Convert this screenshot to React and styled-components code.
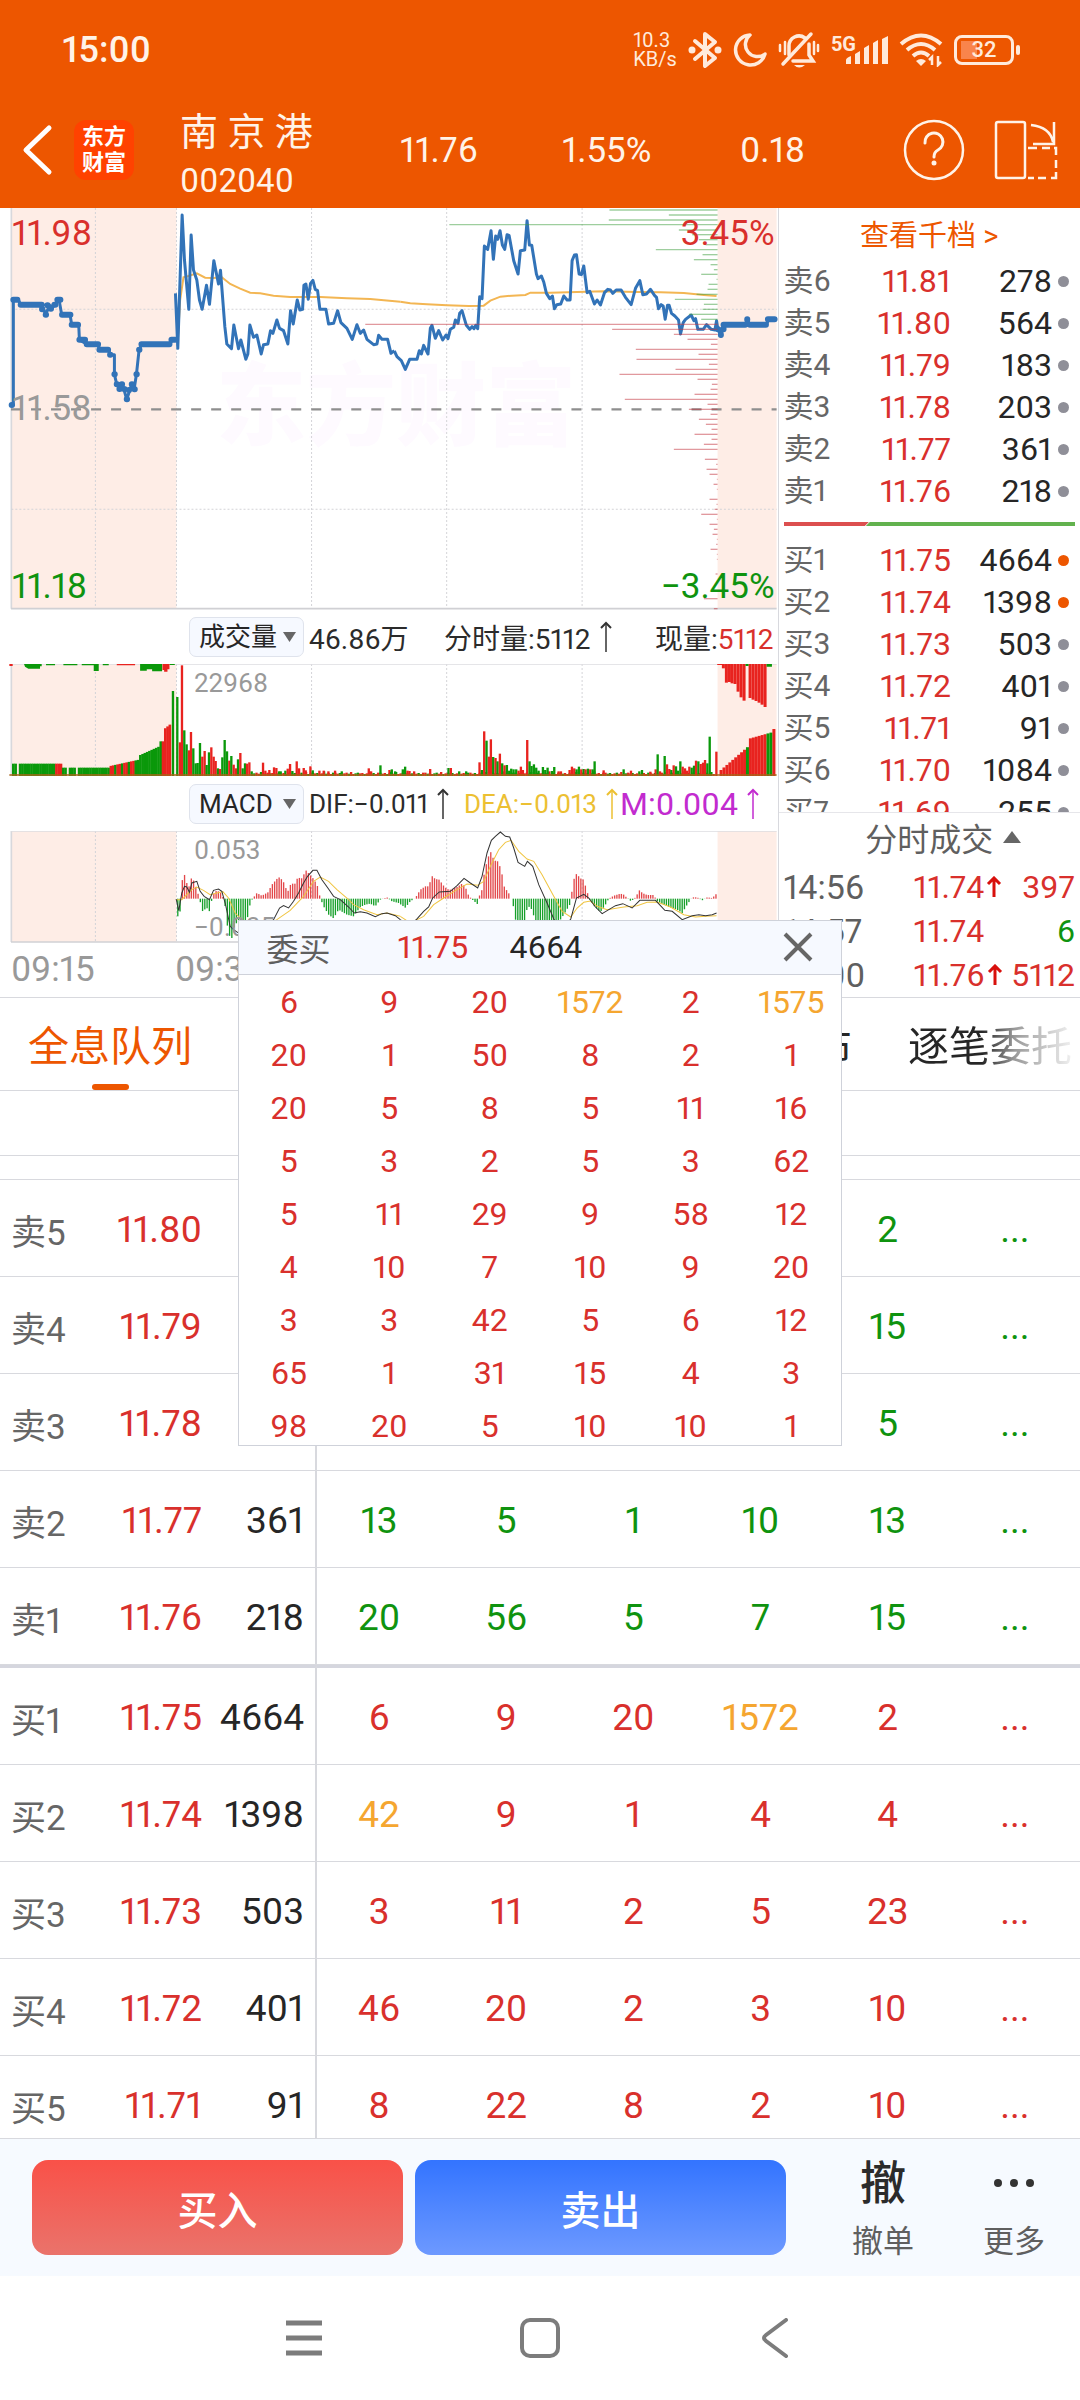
import styled, { createGlobalStyle } from "styled-components";

const RED = "#d9302c";
const GREEN = "#0f930f";
const AMBER = "#f5a630";
const ORANGE = "#ed5600";
const LINE = "#d8d9de";

const colors = { red: RED, green: GREEN, amber: AMBER };

const asks = [
  ["卖6", "11.81", "278"],
  ["卖5", "11.80", "564"],
  ["卖4", "11.79", "183"],
  ["卖3", "11.78", "203"],
  ["卖2", "11.77", "361"],
  ["卖1", "11.76", "218"],
];

const bids = [
  ["买1", "11.75", "4664", true],
  ["买2", "11.74", "1398", true],
  ["买3", "11.73", "503"],
  ["买4", "11.72", "401"],
  ["买5", "11.71", "91"],
  ["买6", "11.70", "1084"],
  ["买7", "11.69", "255"],
];

const deals = [
  { time: "14:56", price: "11.74", up: true, volume: "397", side: "red" },
  { time: "14:57", price: "11.74", up: false, volume: "6", side: "green" },
  { time: "15:00", price: "11.76", up: true, volume: "5112", side: "red" },
];

const sellQueue = [
  ["卖5", "11.80", "564", [20, 3, 8, 5, 2]],
  ["卖4", "11.79", "183", [10, 2, 5, 6, 15]],
  ["卖3", "11.78", "203", [4, 9, 1, 12, 5]],
  ["卖2", "11.77", "361", [13, 5, 1, 10, 13]],
  ["卖1", "11.76", "218", [20, 56, 5, 7, 15]],
];

const buyQueue = [
  ["买1", "11.75", "4664", [6, 9, 20, 1572, 2]],
  ["买2", "11.74", "1398", [42, 9, 1, 4, 4]],
  ["买3", "11.73", "503", [3, 11, 2, 5, 23]],
  ["买4", "11.72", "401", [46, 20, 2, 3, 10]],
  ["买5", "11.71", "91", [8, 22, 8, 2, 10]],
];

const bigOrders = [1572, 1575, 42];

const popupRows = [
  [6, 9, 20, 1572, 2, 1575],
  [20, 1, 50, 8, 2, 1],
  [20, 5, 8, 5, 11, 16],
  [5, 3, 2, 5, 3, 62],
  [5, 11, 29, 9, 58, 12],
  [4, 10, 7, 10, 9, 20],
  [3, 3, 42, 5, 6, 12],
  [65, 1, 31, 15, 4, 3],
  [98, 20, 5, 10, 10, 1],
];

// Chart data is kept in chart units, three to a pixel. The afternoon half
// of every series starts at AFTERNOON.
const AFTERNOON = 1170;

const openAuction =
  "35,618 40,615 40,299 55,299 62,314 125,314 137,344 148,316 160,320 177,299 185,344 210,344 215,374 236,374 238,419 260,433 295,433 298,449 325,449 332,464 343,464 343,523 350,553 360,567 367,553 372,570 380,598 395,553 402,568 409,523 417,449 425,433 510,433 516,419 526,419";
const openAuctionDots =
  "M35 615h1M40 299H52M62 314H125M126 328h1M137 344h1M142 316h1M152 326h1M163 314h3M172 299H181M186 344H211M215 374H234M238 419H255M260 433H294M298 449H324M330 464h1M343 523h1M350 553h1M358 567h1M365 553h1M372 567h1M380 598h1M386 570h1M395 553h1M403 568h1M409 523h1M417 449h1M424 433H508M514 419H525";
const closeAuctionDots =
  "M982 388h1M991 404v1M999 388v-2M999 374H1064M1070 358v1M1078 374H1126M1132 358H1152";

const priceMorning =
  "526,280 533,445 546,45 553,180 566,328 573,105 580,210 590,240 598,300 606,328 619,256 628,313 641,182 655,252 661,211 674,380 680,432 694,446 701,375 715,446 722,420 737,478 743,462 749,375 760,412 770,405 783,462 790,434 803,432 811,392 818,400 830,360 838,385 850,392 863,432 871,332 879,372 891,300 899,330 907,328 911,256 917,252 924,298 931,250 938,241 945,268 952,272 959,328 977,328 985,372 1000,370 1012,332 1022,368 1040,385 1056,418 1070,374 1080,400 1090,390 1100,418 1120,434 1130,432 1135,406 1145,418 1162,418 1172,460 1182,452";
const priceAfternoon =
  "12,453 20,470 33,482 45,508 58,478 80,478 87,452 93,462 100,436 113,462 120,385 125,376 135,415 145,392 157,420 167,405 173,416 180,388 190,382 195,360 203,370 208,340 215,332 228,376 238,388 245,380 251,386 256,376 262,386 268,290 275,296 282,138 292,148 302,92 309,178 316,108 322,118 329,92 336,135 343,148 350,104 356,106 370,182 383,222 390,152 403,150 410,62 417,135 424,136 438,222 443,236 453,228 460,246 468,280 478,296 486,288 492,326 499,314 511,312 520,288 530,300 539,300 545,182 552,165 558,164 566,222 573,224 580,198 590,278 598,274 612,312 620,300 630,315 642,278 652,268 660,270 667,280 677,270 692,270 705,292 722,314 735,265 748,242 757,284 768,282 780,268 792,286 798,292 804,326 812,314 818,318 824,358 831,316 836,316 843,340 853,348 864,360 870,402 878,368 885,358 902,345 910,362 915,356 922,388 938,388 948,374 962,388 973,390 978,362 982,388 992,408 998,374 1065,374 1070,358 1078,374 1128,374 1134,358 1155,358";
const averageMorning =
  "533,420 540,300 550,232 565,228 590,220 615,233 640,234 665,232 690,252 720,266 750,278 780,280 820,287 870,291 960,291 1040,295 1110,297 1200,305";
const averageAfternoon =
  "30,305 60,310 110,313 170,316 235,318 280,317 300,302 330,290 365,287 405,285 420,278 480,278 560,276 640,274 740,276 810,277 880,279 940,285 978,288";

const askDepth = [
  [30, 657], [45, 835], [60, 655], [74, 177], [90, 865], [104, 905], [119, 925],
  [134, 945], [149, 796], [164, 936], [179, 910], [194, 960], [209, 970],
  [223, 932], [238, 978], [253, 954], [268, 951], [283, 918], [298, 853],
  [313, 940], [328, 936], [343, 895], [358, 932],
];
const bidDepth = [
  [373, -75], [388, 665], [403, 850], [418, 891], [433, 961], [448, 736],
  [463, 924], [478, 738], [493, 955], [508, 855], [523, 687], [538, 921],
  [553, 964], [568, 960], [583, 912], [598, 703], [613, 951], [628, 895],
  [643, 960], [658, 925], [673, 946], [688, 963], [703, 912], [718, 963],
  [733, 940], [748, 850], [778, 943], [793, 977], [808, 948], [823, 957],
  [838, 979], [853, 969], [868, 979], [898, 957], [913, 978], [928, 972],
  [943, 932], [958, 979], [973, 957], [988, 970], [1003, 966], [1018, 979],
  [1033, 977], [1048, 960], [1063, 979], [1078, 979], [1122, 975],
  [1196, 940], [1226, 970],
];

// x, top of the bar, colour
const volumeMorning =
  "519,273,g 532,291,g 540,427,r 546,196,r 553,391,g 560,433,g 567,451,r 573,396,r 580,445,g 587,490,g 593,489,g 600,429,g 607,470,r 614,453,r 620,495,g 627,457,g 634,442,r 641,470,r 647,483,r 654,505,g 660,507,r 667,472,g 674,420,g 681,454,g 688,482,r 694,468,g 701,494,r 708,505,r 714,478,g 721,459,r 728,505,g 735,490,g 741,491,r 748,487,r 755,514,g 789,488,r 796,512,r 808,510,r 822,502,r 829,504,r 842,514,g 856,512,g 863,506,r 870,492,r 877,513,g 890,484,r 897,505,r 911,504,r 917,511,r 931,499,r 938,511,g 958,512,r 971,512,r 985,514,r 1005,512,r 1025,514,g 1106,505,r 1113,514,r 1141,496,g 1168,510,r 1175,508,g 1185,514,g";
const volumeAfternoon =
  "3,515,g 38,508,g 45,500,g 52,512,r 58,513,r 120,507,r 175,504,g 182,504,r 228,514,g 268,487,r 275,510,g 282,394,r 289,422,g 296,470,r 302,418,r 309,471,g 316,474,r 322,484,g 329,461,r 336,490,g 343,496,r 350,495,g 357,512,g 363,506,g 370,508,g 378,508,g 385,512,r 392,500,r 398,510,r 411,420,r 418,484,g 424,498,g 431,493,g 438,503,g 445,512,g 458,501,g 465,510,g 472,503,g 485,513,g 492,501,g 505,514,r 512,514,r 538,510,r 545,500,r 552,505,r 559,508,g 566,500,g 573,508,r 580,507,g 586,508,r 593,506,g 600,508,r 607,508,g 613,484,g 640,511,r 700,508,g 722,512,r 755,510,g 780,515,r 796,508,r 802,463,g 809,514,r 823,468,g 830,493,r 837,507,r 843,510,g 850,496,r 857,499,g 863,512,g 870,484,g 877,500,r 884,505,r 890,512,r 897,500,r 904,503,g 911,497,g 917,482,r 924,484,g 931,492,r 938,488,r 944,480,r 951,490,g 958,410,g 978,455,r";

const histogram =
  "528,900 533,950 540,935 545,845 553,825 560,850 568,862 573,836 580,842 590,870 597,893 600,905 606,935 620,925 628,935 636,895 642,880 650,872 662,880 668,892 675,920 684,1000 694,1020 701,985 710,968 740,965 748,920 756,899 770,880 785,888 803,878 815,855 835,832 848,842 862,878 872,852 885,852 892,834 905,836 917,812 930,826 942,840 952,860 960,895 970,920 985,945 1000,956 1015,930 1040,945 1060,950 1080,922 1095,915 1110,912 1125,920 1140,900 1160,893 1175,905 1195,910 1215,924 1230,905 1245,895 1260,870 1275,860 1285,860 1295,829 1305,838 1317,840 1328,856 1340,868 1350,870 1370,862 1385,852 1395,862 1405,888 1415,899 1432,914 1438,885 1445,870 1453,810 1466,765 1473,755 1480,782 1492,785 1502,808 1512,862 1528,885 1538,915 1548,975 1570,975 1582,918 1595,930 1607,975 1670,975 1690,945 1710,912 1715,870 1722,832 1730,820 1737,835 1750,840 1758,870 1768,900 1782,920 1800,937 1815,915 1825,897 1840,888 1860,882 1870,885 1882,897 1892,905 1905,893 1918,870 1925,880 1940,886 1960,886 1970,905 2000,920 2030,930 2045,940 2060,915 2075,893 2090,893 2105,902 2120,893 2135,895 2148,882";
const difMorning =
  "528,898 536,933 545,880 553,860 560,862 568,878 575,850 590,845 600,875 612,890 628,900 640,872 655,868 665,875 675,910 690,980 700,990 730,1010 780,1000 820,960 838,925 850,918 865,925 880,905 895,880 910,850 922,830 938,812 950,812 965,840 985,868 1000,890 1020,900 1045,922 1062,940 1080,936 1100,940 1125,951 1145,942 1160,940 1185,948 1200,960";
const difAfternoon =
  "30,960 50,975 78,960 100,935 115,922 127,895 147,877 180,875 200,858 221,836 240,850 262,865 275,830 290,760 303,722 315,710 330,697 345,710 358,712 370,745 383,788 403,800 411,785 427,800 445,855 470,910 490,958 515,990 541,958 558,895 580,884 595,895 615,922 635,942 655,930 675,918 697,912 725,925 748,902 795,902 823,932 845,935 875,960 905,948 925,945 945,948 965,945 978,940";
const deaMorning =
  "530,900 545,900 560,885 575,870 590,862 610,872 630,885 650,880 668,876 685,895 705,940 730,965 780,985 830,960 870,932 910,890 940,845 960,832 985,845 1010,870 1040,895 1060,915 1090,930 1130,945 1160,940 1200,950";
const deaAfternoon =
  "30,950 60,970 100,950 130,915 160,895 200,870 230,853 262,857 280,845 300,800 325,750 345,728 362,722 385,755 410,778 430,785 455,825 490,890 515,935 541,952 560,925 580,908 600,904 620,920 650,930 700,922 740,918 770,908 800,907 840,922 880,945 915,952 945,950 978,948";

function parsePoints(text) {
  return text.split(" ").map((point) => point.split(",").map(Number));
}

function parseBars(text, shift) {
  return text.split(" ").map((bar) => {
    const [x, top, side] = bar.split(",");
    return { x: Number(x) + shift, top: Number(top), side };
  });
}

const volumeBars = [
  ...parseBars(volumeMorning, 0),
  ...parseBars(volumeAfternoon, AFTERNOON),
];

// quiet minutes between the peaks
const quietBars = Array.from({ length: 206 }, (_, i) => ({
  x: 756 + i * 6.75,
  top: 522 - ((i * 7) % 5) * ((i * 3) % 4 === 0 ? 2 : 1),
  side: (i * 5) % 7 < 4 ? "r" : "g",
}));

const openVolumeBars = Array.from({ length: 70 }, (_, i) => {
  const x = 37 + i * 6.8;
  let top = 491;
  if (x > 185) top = 503;
  if (x > 323) top = 499 - (x - 323) * 0.22;
  if (x > 411) top = 468 - (x - 411) * 0.45;
  if (x > 475) top = 424;
  if (x > 486) top = 390 - (x - 486) * 0.8;
  if (x > 507) top = 352;
  const isRed =
    (x > 166 && x < 182) || (x > 484 && x < 507) || (x > 323 && x < 405 && i % 3);
  const isGap = [2, 24, 28].includes(i);
  return { x: x + 3, top, side: isRed ? "r" : "g", isGap };
}).filter((bar) => !bar.isGap);

const closeVolumeBars = Array.from({ length: 19 }, (_, i) => {
  const x = 991 + i * 8.8;
  let top = 510 - i * 7.6;
  if (x > 1072) top = 417 - (x - 1072) * 0.28;
  if (i === 18) top = 387;
  return {
    x: x + AFTERNOON,
    top,
    side: i === 9 || i === 16 || i === 17 ? "g" : "r",
  };
});

const hangingBars = [
  [998, 205], [1007, 248], [1016, 246], [1024, 250], [1033, 252], [1042, 275],
  [1051, 292], [1060, 302], [1078, 294], [1087, 299], [1096, 303],
  [1105, 308], [1114, 314], [1123, 321],
];

function sampleHistogram() {
  const points = parsePoints(histogram);
  const bars = [];
  let k = 0;
  for (let x = 533; x <= 2150; x += 6.75) {
    while (k < points.length - 2 && points[k + 1][0] < x) k++;
    const [x1, y1] = points[k];
    const [x2, y2] = points[k + 1];
    bars.push({ x, y: y1 + ((y2 - y1) * (x - x1)) / (x2 - x1) });
  }
  return bars;
}

const histogramBars = sampleHistogram();

function Grid({ top, bottom }) {
  return (
    <>
      <rect x="33" y={top} width="496" height={bottom - top} fill="#feede6" />
      <rect x="2151" y={top} width="177" height={bottom - top} fill="#feede6" />
      <g stroke="#d4d4d8" strokeWidth="3" strokeDasharray="6 6">
        {[286, 529, 934, 1339, 1745].map((x) => (
          <line key={x} x1={x} x2={x} y1={top} y2={bottom} />
        ))}
      </g>
      <line x1="34" x2="34" y1={top} y2={bottom} stroke="#d8d8dc" strokeWidth="5" />
    </>
  );
}

function PriceChart() {
  return (
    <Plot $height={402}>
      <Watermark aria-hidden="true">东方财富</Watermark>
      <Canvas viewBox="0 24 2331 1206" preserveAspectRatio="none">
        <Grid top={24} bottom={1226} />
        <g stroke="#d4d4d8" strokeWidth="3" strokeDasharray="6 6">
          <line x1="34" x2="2328" y1="328" y2="328" />
          <line x1="34" x2="2328" y1="928" y2="928" />
        </g>
        <line x1="33" x2="2328" y1="1226" y2="1226" stroke="#d0d0d4" strokeWidth="5" />
        <line
          x1="33"
          x2="2328"
          y1="628"
          y2="628"
          stroke="#8e8e8e"
          strokeWidth="7"
          strokeDasharray="30 30"
        />
        <g fill="none" stroke="#f3b653" strokeWidth="6">
          <polyline points={averageMorning} />
          <polyline points={averageAfternoon} transform={`translate(${AFTERNOON})`} />
        </g>
        <g fill="none" stroke="#3273b8" strokeWidth="9" strokeLinejoin="round">
          <polyline points={openAuction} />
          <polyline points={priceMorning} />
          <polyline points={priceAfternoon} transform={`translate(${AFTERNOON})`} />
        </g>
        <g fill="none" stroke="#3273b8" strokeWidth="18" strokeLinecap="round">
          <path d={openAuctionDots} />
          <path d={closeAuctionDots} transform={`translate(${AFTERNOON})`} />
        </g>
        <g transform={`translate(${AFTERNOON})`} strokeWidth="4" opacity="0.5">
          {askDepth.map(([y, x]) => (
            <line key={y} x1={x} x2="981" y1={y} y2={y} stroke="#3f9f3f" />
          ))}
          {bidDepth.map(([y, x]) => (
            <line key={y} x1={x} x2="981" y1={y} y2={y} stroke="#c4363f" />
          ))}
        </g>
      </Canvas>
      <CornerLabel $color={RED} $top={8} $left={12}>11.98</CornerLabel>
      <CornerLabel $color="#999" $top={183} $left={12}>11.58</CornerLabel>
      <CornerLabel $color={GREEN} $top={361} $left={12}>11.18</CornerLabel>
      <CornerLabel $color={RED} $top={8} $right={3}>3.45%</CornerLabel>
      <CornerLabel $color={GREEN} $top={361} $right={3}>−3.45%</CornerLabel>
    </Plot>
  );
}

function VolumeChart() {
  const fill = { r: "#e8231f", g: "#0a980a" };
  return (
    <Plot $height={112}>
      <Canvas viewBox="0 192 2331 336" preserveAspectRatio="none">
        <Grid top={192} bottom={528} />
        <line x1="33" x2="2328" y1="193" y2="193" stroke="#dcdce0" strokeWidth="3" />
        {openVolumeBars.map(({ x, top, side }) => (
          <rect key={x} x={x - 4} y={top} width="8" height={528 - top} fill={fill[side]} />
        ))}
        {[...quietBars, ...volumeBars].map(({ x, top, side }, i) => (
          <rect key={i} x={x - 4} y={top} width="7" height={528 - top} fill={fill[side]} />
        ))}
        {closeVolumeBars.map(({ x, top, side }) => (
          <rect key={x} x={x - 4} y={top} width="9" height={528 - top} fill={fill[side]} />
        ))}
        {hangingBars.map(([x, bottom]) => (
          <rect
            key={x}
            x={x + AFTERNOON - 4}
            y="192"
            width="9"
            height={bottom - 192}
            fill={fill.r}
          />
        ))}
        <path
          fill={fill.g}
          d="M72 192H125V199H120V206H85L75 200ZM138 192H165V196H138ZM190 192H232V196H190ZM245 192H281V196H245ZM281 192H296V213H281ZM308 192H326V196H308ZM420 192H486V214H456V208H440V212H420ZM508 192H524V195H508ZM2235 192H2244V198H2235ZM2298 192H2314V200H2298Z"
        />
        <path
          fill={fill.r}
          d="M28 192H38V198H28ZM350 192H405V196H350ZM487 192H508V208H502V215H492V210H487ZM2150 192H2170V195H2150Z"
        />
        <line x1="28" x2="2328" y1="525" y2="525" stroke="#a8641a" strokeWidth="4" />
      </Canvas>
      <ScaleLabel $top={4}>22968</ScaleLabel>
    </Plot>
  );
}

function MacdChart() {
  return (
    <Plot $height={112}>
      <Canvas viewBox="0 694 2331 336" preserveAspectRatio="none">
        <Grid top={694} bottom={1027} />
        <line x1="33" x2="2328" y1="695" y2="695" stroke="#dcdce0" strokeWidth="3" />
        <line x1="33" x2="2328" y1="1027" y2="1027" stroke="#d0d0d4" strokeWidth="4" />
        {histogramBars.map(({ x, y }) => (
          <rect
            key={x}
            x={x - 2}
            y={Math.min(y, 897)}
            width="4"
            height={Math.abs(y - 897)}
            fill={y < 897 ? "#e2474a" : "#17a02a"}
          />
        ))}
        <g fill="none" stroke="#f0c541" strokeWidth="3">
          <polyline points={deaMorning} />
          <polyline points={deaAfternoon} transform={`translate(${AFTERNOON})`} />
        </g>
        <g fill="none" stroke="#333" strokeWidth="3">
          <polyline points={difMorning} />
          <polyline points={difAfternoon} transform={`translate(${AFTERNOON})`} />
        </g>
      </Canvas>
      <ScaleLabel $top={4}>0.053</ScaleLabel>
      <ScaleLabel $top={81}>−0.035</ScaleLabel>
    </Plot>
  );
}

function LongArrow({ color }) {
  return (
    <svg width="12" height="32" viewBox="0 0 12 32" fill="none" stroke={color}>
      <path d="M1 7L6 2L11 7" strokeWidth="2" />
      <path d="M6 2V31" strokeWidth="1.5" />
    </svg>
  );
}

function StatusBar() {
  const tone = "#ffeadb";
  return (
    <StatusRow>
      <Clock>15:00</Clock>
      <StatusIcons>
        <NetSpeed>
          10.3
          <br />
          KB/s
        </NetSpeed>
        <svg width="34" height="38" viewBox="0 0 34 38" fill="none" stroke={tone} strokeWidth="4" strokeLinejoin="round" strokeLinecap="round">
          <path d="M7 10L27 27L17 35V3L27 11L7 28" />
          <g fill={tone} stroke="none">
            <circle cx="4" cy="19" r="3.5" />
            <circle cx="30" cy="19" r="3.5" />
          </g>
        </svg>
        <svg width="34" height="36" viewBox="0 0 34 36" fill="none" stroke={tone} strokeWidth="3.5" strokeLinejoin="round">
          <path d="M17 3A15 15 0 1 0 32 22A12 12 0 0 1 17 3Z" />
        </svg>
        <svg width="42" height="38" viewBox="0 0 42 38" fill="none" stroke={tone} strokeWidth="3.5" strokeLinecap="round">
          <path d="M11 24V15A10 10 0 0 1 27 7M31 13V24L35 30H15" />
          <path d="M5 33L33 3" />
          <path d="M2 14V20M7 11V23M36 11V23M40 14V20" strokeWidth="2.5" />
          <path d="M16 34H27Q21 39 16 34Z" fill={tone} stroke="none" />
        </svg>
        <Signal>
          <small>5G</small>
          <svg width="42" height="28" viewBox="0 0 42 28" fill={tone}>
            <path d="M0 24Q0 22 5 20V28H0ZM9 18L14 15V28H9ZM18 12L23 9V28H18ZM27 7L32 4V28H27ZM36 3L42 0V28H36Z" />
          </svg>
        </Signal>
        <svg width="44" height="34" viewBox="0 0 44 34" fill="none" stroke={tone} strokeWidth="4">
          <path d="M2 11Q22 -6 42 11" />
          <path d="M8 17Q22 5 36 17" />
          <path d="M14 23Q22 16 30 23" />
          <path d="M17 28Q22 24 27 28L22 33Z" fill={tone} stroke="none" />
          <path d="M33 32V24L30 27M39 23V32L42 29" strokeWidth="2.5" />
        </svg>
        <Battery>
          <span>32</span>
        </Battery>
      </StatusIcons>
    </StatusRow>
  );
}

function BookRow({ row }) {
  const [label, price, volume, isActive] = row;
  return (
    <BookLine>
      <BookLabel>{label}</BookLabel>
      <BookPrice>{price}</BookPrice>
      <span>{volume}</span>
      <Dot $isActive={isActive} />
    </BookLine>
  );
}

function QueueRow({ row, side }) {
  const [label, price, total, orders] = row;
  return (
    <tr>
      <LabelCell scope="row">{label}</LabelCell>
      <PriceCell>{price}</PriceCell>
      <TotalCell>{total}</TotalCell>
      {orders.map((order, i) => (
        <OrderCell key={i} $color={bigOrders.includes(order) ? "amber" : side}>
          {order}
        </OrderCell>
      ))}
      <OrderCell $color={side}>...</OrderCell>
    </tr>
  );
}

export default function App() {
  return (
    <Page>
      <GlobalStyle />
      <Top>
        <StatusBar />
        <Header>
          <IconButton aria-label="返回">
            <svg width="32" height="52" viewBox="0 0 32 52" fill="none" stroke="#fff" strokeWidth="5" strokeLinecap="round" strokeLinejoin="round">
              <path d="M27 4L4 26L27 48" />
            </svg>
          </IconButton>
          <Logo>
            东方
            <br />
            财富
          </Logo>
          <Stock>
            <h1>南 京 港</h1>
            <p>002040</p>
          </Stock>
          <Quote $width={162}>11.76</Quote>
          <Quote $width={178}>1.55%</Quote>
          <Quote $width={163}>0.18</Quote>
          <HeaderTools>
            <IconButton aria-label="帮助">
              <svg width="62" height="62" viewBox="0 0 62 62" fill="none" stroke="#fff3e8" strokeWidth="2.5" strokeLinecap="round">
                <circle cx="31" cy="31" r="29" />
                <path d="M22 24A9 9 0 1 1 35 31Q31 33 31 38" strokeWidth="3" />
                <circle cx="31" cy="44" r="2.5" fill="#fff3e8" stroke="none" />
              </svg>
            </IconButton>
            <IconButton aria-label="横屏">
              <svg width="64" height="60" viewBox="0 0 64 60" fill="none" stroke="#fff3e8" strokeWidth="2.5">
                <rect x="2" y="2" width="29" height="56" rx="2" />
                <path d="M37 5Q56 7 59 22M60 2V24H39" />
                <path d="M34 28H43M48 28H56M60 28H62V35M62 40V48M62 52V58H57M52 58H44M40 58H34" />
              </svg>
            </IconButton>
          </HeaderTools>
        </Header>
      </Top>

      <Trading>
        <Charts>
          <PriceChart />
          <ToolRow $columns="115px 130px 1fr auto" $height={54}>
            <Picker>
              <select aria-label="指标一" defaultValue="vol">
                <option value="vol">成交量</option>
              </select>
              <svg width="13" height="10" viewBox="0 0 13 10" fill="#666">
                <path d="M0 0H13L6.5 10Z" />
              </svg>
            </Picker>
            <Reading>46.86万</Reading>
            <Reading>
              分时量:5112 <LongArrow color="#333" />
            </Reading>
            <Reading>
              <span>
                现量:<Red>5112</Red>
              </span>
            </Reading>
          </ToolRow>
          <VolumeChart />
          <ToolRow $columns="115px 150px 151px 1fr" $height={55}>
            <Picker>
              <select aria-label="指标二" defaultValue="macd">
                <option value="macd">MACD</option>
              </select>
              <svg width="13" height="10" viewBox="0 0 13 10" fill="#666">
                <path d="M0 0H13L6.5 10Z" />
              </svg>
            </Picker>
            <Reading $size={26}>
              DIF:−0.011 <LongArrow color="#333" />
            </Reading>
            <Reading $color="#ecc032" $size={26}>
              DEA:−0.013 <LongArrow color="#ecc032" />
            </Reading>
            <Reading $color="#c22bcf" $size={32}>
              M:0.004 <LongArrow color="#c22bcf" />
            </Reading>
          </ToolRow>
          <MacdChart />
          <TimeAxis>
            <span>09:15</span>
            <span>09:30</span>
          </TimeAxis>
        </Charts>

        <Side>
          <Book>
            <BookLink href="#levels">查看千档 &gt;</BookLink>
            {asks.map((row) => (
              <BookRow key={row[0]} row={row} />
            ))}
            <Balance>
              <svg width="100%" height="4" viewBox="0 0 292 4" preserveAspectRatio="none">
                <path d="M0 0H85L81 4H0Z" fill="#dc4f4f" />
                <path d="M86 0H292V4H82Z" fill="#62b24e" />
              </svg>
            </Balance>
            {bids.map((row) => (
              <BookRow key={row[0]} row={row} />
            ))}
          </Book>
          <Deals>
            <DealsTitle>
              分时成交
              <svg width="18" height="12" viewBox="0 0 18 12" fill="#666">
                <path d="M0 12H18L9 0Z" />
              </svg>
            </DealsTitle>
            {deals.map(({ time, price, up, volume, side }) => (
              <Deal key={time}>
                <DealTime>{time}</DealTime>
                <DealPrice>
                  {price}
                  {up && (
                    <svg width="16" height="22" viewBox="0 0 16 22" fill="none" stroke="#d8100c" strokeWidth="3">
                      <path d="M2 8L8 2L14 8M8 2V21" />
                    </svg>
                  )}
                </DealPrice>
                <DealVolume $color={side}>{volume}</DealVolume>
              </Deal>
            ))}
          </Deals>
        </Side>
      </Trading>

      <Tabs>
        <Tab $isActive>全息队列</Tab>
        <Tab>成交分布</Tab>
        <Tab $isFading>逐笔委托</Tab>
      </Tabs>

      <QueueArea>
        <EmptyStrip />
        <Queue>
          <colgroup>
            <col style={{ width: 90 }} />
            <col style={{ width: 112 }} />
            <col style={{ width: 115 }} />
            <col span="6" />
          </colgroup>
          <tbody>
            {sellQueue.map((row) => (
              <QueueRow key={row[0]} row={row} side="green" />
            ))}
          </tbody>
          <BuyBody>
            {buyQueue.map((row) => (
              <QueueRow key={row[0]} row={row} side="red" />
            ))}
          </BuyBody>
        </Queue>
      </QueueArea>

      <ActionBar>
        <TradeButton $from="#f95148" $to="#ea736b">买入</TradeButton>
        <TradeButton $from="#3374ff" $to="#6d99ff">卖出</TradeButton>
        <SmallAction>
          <strong>撤</strong>
          <span>撤单</span>
        </SmallAction>
        <SmallAction>
          <svg width="42" height="46" viewBox="0 0 42 46" fill="#333">
            <circle cx="5" cy="23" r="4" />
            <circle cx="21" cy="23" r="4" />
            <circle cx="37" cy="23" r="4" />
          </svg>
          <span>更多</span>
        </SmallAction>
      </ActionBar>

      <SystemNav>
        <IconButton aria-label="最近任务">
          <svg width="40" height="40" viewBox="0 0 40 40" stroke="#7c7c7c" strokeWidth="5">
            <path d="M2 5H38M2 20H38M2 35H38" />
          </svg>
        </IconButton>
        <IconButton aria-label="主页">
          <svg width="40" height="40" viewBox="0 0 40 40" fill="none" stroke="#7c7c7c" strokeWidth="4">
            <rect x="2" y="2" width="36" height="36" rx="8" />
          </svg>
        </IconButton>
        <IconButton aria-label="后退">
          <svg width="40" height="40" viewBox="0 0 40 40" fill="none" stroke="#7c7c7c" strokeWidth="4" strokeLinecap="round">
            <path d="M30 2L10 17Q6 20 10 23L30 38" />
          </svg>
        </IconButton>
      </SystemNav>

      <Popup role="dialog" aria-label="委买队列">
        <PopupHeader>
          <PopupTitle>委买</PopupTitle>
          <Red>11.75</Red>
          <PopupTotal>4664</PopupTotal>
          <IconButton aria-label="关闭">
            <svg width="30" height="30" viewBox="0 0 30 30" stroke="#666" strokeWidth="4">
              <path d="M2 2L28 28M28 2L2 28" />
            </svg>
          </IconButton>
        </PopupHeader>
        <PopupTable>
          <tbody>
            {popupRows.map((row, i) => (
              <tr key={i}>
                {row.map((order, k) => (
                  <PopupCell key={k} $isBig={order > 1000}>
                    {order}
                  </PopupCell>
                ))}
              </tr>
            ))}
          </tbody>
        </PopupTable>
      </Popup>
    </Page>
  );
}

const GlobalStyle = createGlobalStyle`
  * {
    box-sizing: border-box;
  }

  body {
    margin: 0;
    background: #fff;
    color: #262626;
    font-family: Roboto, "Noto Sans CJK SC", sans-serif;
    font-variant-numeric: proportional-nums;
  }

  button,
  select {
    font: inherit;
    color: inherit;
    border: none;
    background: none;
    padding: 0;
  }

  svg {
    display: block;
    flex-shrink: 0;
  }
`;

const Page = styled.main`
  position: relative;
  display: flex;
  flex-direction: column;
  height: 100vh;
  overflow: hidden;
`;

const Top = styled.header`
  flex-shrink: 0;
  background: ${ORANGE};
  color: #fff3e8;
`;

const StatusRow = styled.div`
  display: flex;
  justify-content: space-between;
  align-items: center;
  height: 100px;
  padding: 0 66px 0 62px;
`;

const Clock = styled.time`
  font-size: 36px;
  font-weight: 500;
`;

const StatusIcons = styled.div`
  display: flex;
  align-items: center;
  gap: 11px;
  color: #ffeadb;
`;

const NetSpeed = styled.span`
  font-size: 20px;
  line-height: 19px;
`;

const Signal = styled.span`
  display: flex;
  align-items: flex-end;
  height: 28px;

  small {
    align-self: flex-start;
    margin-right: -10px;
    font-size: 20px;
    line-height: 16px;
    font-weight: 700;
  }
`;

const Battery = styled.span`
  position: relative;
  width: 60px;
  height: 30px;
  border: 3px solid #ffeadb;
  border-radius: 8px;
  background: linear-gradient(#f9844c, #f9844c) 4px 3px / 16px 18px no-repeat;
  font-size: 22px;
  font-weight: 500;
  line-height: 24px;
  text-align: center;

  &::after {
    content: "";
    position: absolute;
    top: 7px;
    right: -9px;
    width: 4px;
    height: 10px;
    border-radius: 2px;
    background: #ffeadb;
  }
`;

const Header = styled.div`
  display: flex;
  align-items: center;
  height: 108px;
  padding: 0 22px 8px;
`;

const HeaderTools = styled.div`
  display: flex;
  align-items: center;
  gap: 29px;
`;

const IconButton = styled.button`
  display: flex;
  align-items: center;
  justify-content: center;
`;

const Logo = styled.span`
  width: 60px;
  height: 60px;
  margin: 0 46px 0 20px;
  padding-top: 4px;
  border-radius: 12px;
  background: #ff4200;
  color: #fff;
  font-size: 22px;
  font-weight: 700;
  line-height: 26px;
  text-align: center;
`;

const Stock = styled.div`
  flex: 1;
  padding-top: 9px;

  h1,
  p {
    margin: 0;
    font-weight: 400;
  }

  h1 {
    font-size: 38px;
    line-height: 52px;
  }

  p {
    font-size: 33px;
    line-height: 46px;
  }
`;

const Quote = styled.span`
  width: ${({ $width }) => $width}px;
  font-size: 35px;
`;

const Trading = styled.section`
  display: grid;
  grid-template-columns: 18fr 7fr;
  flex-shrink: 0;
  border-bottom: 1px solid ${LINE};
`;

const Charts = styled.div`
  min-width: 0;
`;

const Plot = styled.div`
  position: relative;
  height: ${({ $height }) => $height}px;
`;

const Canvas = styled.svg`
  position: relative;
  width: 100%;
  height: 100%;
`;

const Watermark = styled.span`
  position: absolute;
  top: 150px;
  left: 216px;
  color: #fefaff;
  font-size: 90px;
  font-weight: 900;
  line-height: 100px;
`;

const CornerLabel = styled.span`
  position: absolute;
  top: ${({ $top }) => $top}px;
  left: ${({ $left }) => ($left ? `${$left}px` : "auto")};
  right: ${({ $right }) => ($right ? `${$right}px` : "auto")};
  color: ${({ $color }) => $color};
  font-size: 35px;
  line-height: 36px;
`;

const ScaleLabel = styled.span`
  position: absolute;
  top: ${({ $top }) => $top}px;
  left: 194px;
  color: #999;
  font-size: 26px;
  line-height: 30px;
`;

const ToolRow = styled.div`
  display: grid;
  grid-template-columns: ${({ $columns }) => $columns};
  align-items: center;
  gap: 5px;
  height: ${({ $height }) => $height}px;
  padding: 0 4px 0 189px;
`;

const Picker = styled.label`
  display: flex;
  align-items: center;
  height: 40px;
  padding: 0 7px 0 9px;
  border: 1px solid #dfe3ec;
  border-radius: 7px;
  background: #f6f9ff;

  select {
    flex: 1;
    min-width: 0;
    appearance: none;
    font-size: 26px;
  }
`;

const Reading = styled.span`
  display: flex;
  align-items: center;
  gap: 9px;
  color: ${({ $color }) => $color || "#2b2b2b"};
  font-size: ${({ $size }) => $size || 28}px;
  white-space: nowrap;
`;

const Red = styled.span`
  color: ${RED};
`;

const TimeAxis = styled.div`
  display: grid;
  grid-template-columns: 164px 1fr;
  height: 54px;
  padding-left: 11px;
  color: #999;
  font-size: 35px;
  line-height: 54px;
`;

const Side = styled.aside`
  display: flex;
  flex-direction: column;
  min-width: 0;
  border-left: 1px solid ${LINE};
`;

const Book = styled.div`
  flex: 1 1 0;
  height: 0;
  overflow: hidden;
  border-bottom: 1px solid #e6e6ea;
`;

const BookLink = styled.a`
  display: block;
  height: 52px;
  padding-top: 4px;
  color: ${ORANGE};
  font-size: 29px;
  line-height: 48px;
  text-align: center;
  text-decoration: none;
`;

const BookLine = styled.div`
  display: grid;
  grid-template-columns: 64px 1fr 101px 28px;
  align-items: center;
  height: 42px;
  padding-left: 5px;
  font-size: 32px;
  line-height: 42px;
  text-align: right;
`;

const BookLabel = styled.span`
  color: #666;
  font-size: 30px;
  text-align: left;
`;

const BookPrice = styled.span`
  color: ${RED};
`;

const Dot = styled.i`
  width: 11px;
  height: 11px;
  margin-left: 6px;
  border-radius: 50%;
  background: ${({ $isActive }) => ($isActive ? ORANGE : "#8f8f98")};
`;

const Balance = styled.div`
  padding: 10px 5px 13px;
`;

const Deals = styled.div`
  color: #5f5f5f;
`;

const DealsTitle = styled.div`
  display: flex;
  align-items: center;
  justify-content: center;
  gap: 10px;
  height: 52px;
  padding: 0 0 4px 28px;
  font-size: 32px;
`;

const Deal = styled.div`
  display: grid;
  grid-template-columns: 130px 1fr auto;
  height: 44px;
  padding: 0 5px;
  font-size: 32px;
  line-height: 44px;
`;

const DealTime = styled.span`
  font-size: 34px;
`;

const DealPrice = styled.span`
  display: flex;
  align-items: center;
  gap: 2px;
  color: ${RED};
`;

const DealVolume = styled.span`
  color: ${({ $color }) => colors[$color]};
`;

const Tabs = styled.nav`
  display: flex;
  flex-shrink: 0;
  height: 93px;
  padding: 0 8px 0 28px;
  border-bottom: 1px solid ${LINE};
`;

const Tab = styled.button`
  position: relative;
  padding-bottom: 2px;
  color: ${({ $isActive }) => ($isActive ? ORANGE : "#262626")};
  font-size: 41px;
  white-space: nowrap;

  &:first-child {
    margin-right: auto;
  }

  & + & + & {
    margin-left: 56px;
  }

  ${({ $isFading }) =>
    $isFading &&
    `
    background: linear-gradient(90deg, #262626 45%, #9a9a9a 65%, #f0f0f0);
    background-clip: text;
    color: transparent;
  `}

  ${({ $isActive }) =>
    $isActive &&
    `
    &::after {
      content: "";
      position: absolute;
      bottom: 0;
      left: 64px;
      width: 37px;
      height: 6px;
      border-radius: 3px;
      background: ${ORANGE};
    }
  `}
`;

const QueueArea = styled.section`
  flex: 1 1 0;
  min-height: 0;
  overflow: hidden;
`;

const EmptyStrip = styled.div`
  height: 65px;
  margin-bottom: 23px;
  border-bottom: 1px solid ${LINE};
`;

const Queue = styled.table`
  width: 100%;
  table-layout: fixed;
  border-collapse: separate;
  border-spacing: 0;
  border-top: 1px solid ${LINE};
  font-size: 37px;

  th,
  td {
    height: 97px;
    padding: 2px 0 0;
    border-bottom: 1px solid ${LINE};
    font-weight: 400;
  }
`;

const BuyBody = styled.tbody`
  tr:first-child > * {
    height: 100px;
    border-top: 3px solid #d5d6de;
  }
`;

const LabelCell = styled.th`
  && {
    padding-left: 11px;
  }

  color: #666;
  font-size: 35px;
  text-align: left;
`;

const PriceCell = styled.td`
  color: ${RED};
  text-align: right;
`;

const TotalCell = styled.td`
  && {
    padding-right: 11px;
    border-right: 2px solid ${LINE};
  }

  text-align: right;
`;

const OrderCell = styled.td`
  && {
    padding-right: 3px;
  }

  color: ${({ $color }) => colors[$color]};
  text-align: center;
`;

const ActionBar = styled.footer`
  display: grid;
  grid-template-columns: 1fr 1fr 170px 68px;
  gap: 12px;
  flex-shrink: 0;
  height: 138px;
  padding: 21px 32px;
  border-top: 1px solid ${LINE};
  background: #f6faff;
`;

const TradeButton = styled.button`
  border-radius: 16px;
  background: linear-gradient(${({ $from, $to }) => `${$from}, ${$to}`});
  color: #fff;
  font-size: 40px;
  font-weight: 500;
`;

const SmallAction = styled.button`
  display: flex;
  flex-direction: column;
  align-items: center;
  justify-content: space-between;
  color: #5f5f5f;
  font-size: 31px;
  line-height: 26px;

  strong {
    color: #2b2b2b;
    font-size: 46px;
    font-weight: 500;
    line-height: 46px;
  }
`;

const SystemNav = styled.nav`
  display: flex;
  justify-content: center;
  align-items: center;
  gap: 196px;
  flex-shrink: 0;
  height: 124px;
`;

const Popup = styled.div`
  position: absolute;
  top: 920px;
  left: 22%;
  right: 22%;
  height: 526px;
  overflow: hidden;
  border: 1px solid #cfd2da;
  background: #fff;
`;

const PopupHeader = styled.div`
  display: grid;
  grid-template-columns: 131px 112px 1fr auto;
  align-items: center;
  height: 54px;
  padding: 0 28px 2px;
  border-bottom: 1px solid #cfd2da;
  background: #f6f9ff;
  font-size: 32px;
`;

const PopupTitle = styled.span`
  color: #5f5f5f;
`;

const PopupTotal = styled.span`
  color: #262626;
`;

const PopupTable = styled.table`
  width: 100%;
  table-layout: fixed;
  border-collapse: collapse;
  font-size: 32px;
`;

const PopupCell = styled.td`
  height: 53px;
  padding: 0;
  color: ${({ $isBig }) => ($isBig ? AMBER : RED)};
  line-height: 40px;
  text-align: center;
`;
